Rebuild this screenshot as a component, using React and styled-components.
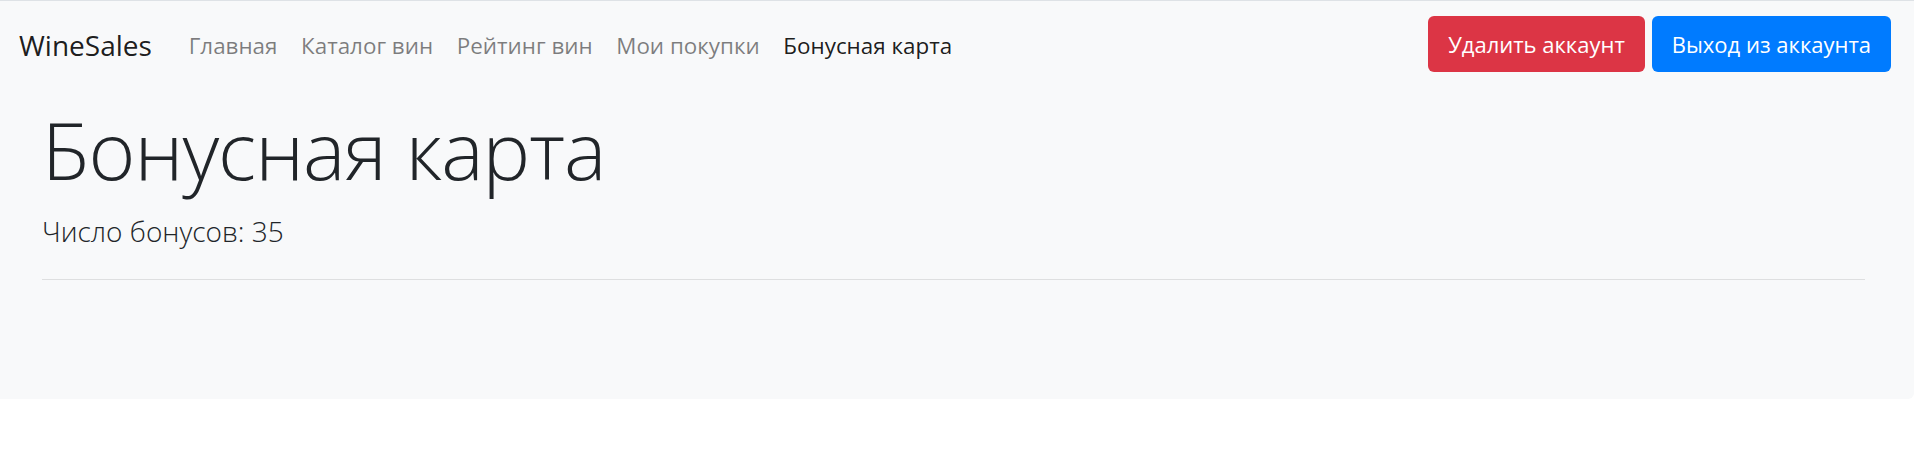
import React from 'react'
import styled, { createGlobalStyle } from 'styled-components'

const GlobalStyle = createGlobalStyle`
body{
  margin:0;
  background:#fff;
  font-family:"Open Sans","Noto Sans",sans-serif;
  color:#212529;
}
`;

const Page = styled.div`
  background:#f8f9fa;
  border-top:1px solid #dee2e6;
  border-bottom-right-radius:6px;
  height:399px;
  box-sizing:border-box;
`;

const Navbar = styled.nav`
  display:flex;
  align-items:center;
  height:85px;
  padding:0 23px 0 19px;
  box-sizing:border-box;
`;

const Brand = styled.a`
  font-size:28px;
  color:rgba(0,0,0,.9);
  text-decoration:none;
  margin-right:25px;
  margin-top:3px;
`;

const NavList = styled.ul`
  display:flex;
  list-style:none;
  margin:4px 0 0;
  padding:0;
  flex:1;
`;

const NavLink = styled.a`
  display:block;
  padding:0 11.8px;
  font-size:22.4px;
  text-decoration:none;
  color:${p => p.$active ? 'rgba(0,0,0,.9)' : 'rgba(0,0,0,.5)'};
`;

const Actions = styled.div`
  display:flex;
  gap:7px;
`;

const Button = styled.button`
  height:56px;
  padding:0 20px;
  border:none;
  border-radius:6px;
  font-family:inherit;
  font-size:22px;
  color:#fff;
  background:${p => p.$variant === 'danger' ? '#dc3545' : '#007bff'};
  cursor:pointer;
`;

const Jumbotron = styled.section`
  padding:15px 49px 0 42px;
`;

const Title = styled.h1`
  font-size:80px;
  font-weight:300;
  letter-spacing:-1px;
  line-height:1.2;
  margin:0;
`;

const Lead = styled.p`
  font-size:28px;
  font-weight:300;
  margin:15px 0 0;
`;

const Rule = styled.hr`
  border:none;
  border-top:1px solid rgba(0,0,0,.1);
  margin:29px 0 0;
`;

const links = ['Главная','Каталог вин','Рейтинг вин','Мои покупки','Бонусная карта']

const App = () => {
  return (
    <>
      <GlobalStyle/>
      <Page>
        <Navbar>
          <Brand href="#">WineSales</Brand>
          <NavList>
            {links.map((l, i) => (
              <li key={l}><NavLink href="#" $active={i === 4}>{l}</NavLink></li>
            ))}
          </NavList>
          <Actions>
            <Button $variant="danger">Удалить аккаунт</Button>
            <Button>Выход из аккаунта</Button>
          </Actions>
        </Navbar>
        <Jumbotron>
          <Title>Бонусная карта</Title>
          <Lead>Число бонусов: 35</Lead>
          <Rule/>
        </Jumbotron>
      </Page>
    </>
  )
}

export default App
